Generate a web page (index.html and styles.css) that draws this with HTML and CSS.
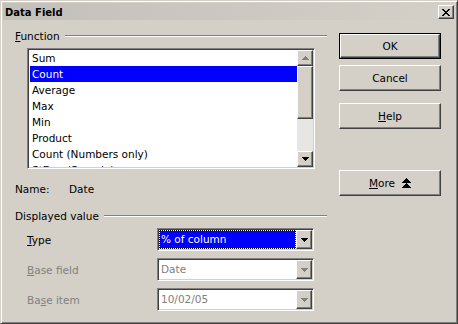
FILE: index.html
```html
<!DOCTYPE html>
<html lang="en">
<head>
  <meta charset="UTF-8">
  <title>Data Field</title>
  <link rel="stylesheet" href="styles.css">
</head>
<body>
  <div class="window">
    <div class="titlebar">
      <span class="title">Data Field</span>
      <div class="close raised">
        <svg width="8" height="7" viewBox="0 0 8 7" shape-rendering="crispEdges"><path d="M0 0h2v1h1v1h2V1h1V0h2v1H7v1H6v1H5v1h1v1h1v1h1v1H6V6H5V5H3v1H2v1H0V6h1V5h1V4h1V3H2V2H1V1H0z" fill="#000"/></svg>
      </div>
    </div>

    <div class="main">
      <div class="left">
        <div class="section"><span><u>F</u>unction</span><i class="rule"></i></div>

        <div class="listbox">
          <ul class="items">
            <li>Sum</li>
            <li class="sel">Count</li>
            <li>Average</li>
            <li>Max</li>
            <li>Min</li>
            <li>Product</li>
            <li>Count (Numbers only)</li>
            <li>StDev (Sample)</li>
          </ul>
          <div class="vscroll">
            <div class="sbtn raised">
              <svg width="7" height="4" viewBox="0 0 7 4" shape-rendering="crispEdges"><path d="M3 0h1v1h1v1h1v1h1v1H0V3h1V2h1V1h1z" fill="#808080"/></svg>
            </div>
            <div class="thumb raised"></div>
            <div class="track"></div>
            <div class="sbtn raised">
              <svg width="7" height="4" viewBox="0 0 7 4" shape-rendering="crispEdges"><path d="M0 0h7v1H6v1H5v1H4v1H3V3H2V2H1V1H0z" fill="#000"/></svg>
            </div>
          </div>
        </div>

        <div class="name-row"><span class="key">Name:</span><span>Date</span></div>

        <div class="section"><span>Displayed value</span><i class="rule"></i></div>

        <div class="field-row">
          <span class="label"><u>T</u>ype</span>
          <div class="combo">
            <div class="value focus"><span>% of column</span></div>
            <div class="dbtn raised">
              <svg width="7" height="4" viewBox="0 0 7 4" shape-rendering="crispEdges"><path d="M0 0h7v1H6v1H5v1H4v1H3V3H2V2H1V1H0z" fill="#000"/></svg>
            </div>
          </div>
        </div>

        <div class="field-row disabled">
          <span class="label"><u>B</u>ase field</span>
          <div class="combo">
            <div class="value">Date</div>
            <div class="dbtn raised">
              <svg width="7" height="4" viewBox="0 0 7 4" shape-rendering="crispEdges"><path d="M0 0h7v1H6v1H5v1H4v1H3V3H2V2H1V1H0z" fill="#808080"/></svg>
            </div>
          </div>
        </div>

        <div class="field-row disabled">
          <span class="label">Ba<u>s</u>e item</span>
          <div class="combo">
            <div class="value">10/02/05</div>
            <div class="dbtn raised">
              <svg width="7" height="4" viewBox="0 0 7 4" shape-rendering="crispEdges"><path d="M0 0h7v1H6v1H5v1H4v1H3V3H2V2H1V1H0z" fill="#808080"/></svg>
            </div>
          </div>
        </div>
      </div>

      <div class="right">
        <div class="default-frame"><button class="btn raised">OK</button></div>
        <button class="btn raised cancel">Cancel</button>
        <button class="btn raised help"><span><u>H</u>elp</span></button>
        <button class="btn raised more">
          <span><u>M</u>ore</span>
          <svg width="9" height="10" viewBox="0 0 9 10" shape-rendering="crispEdges"><path d="M4 0h1v1h1v1h1v1h1v1h1v1H0V4h1V3h1V2h1V1h1z M4 5h1v1h1v1h1v1h1v1h1v1H0V9h1V8h1V7h1V6h1z" fill="#000"/></svg>
        </button>
      </div>
    </div>
  </div>
</body>
</html>
```

FILE: styles.css
```css
body {
  margin: 0;
  background: #d4d0c8;
  font-family: "DejaVu Sans", sans-serif;
  font-size: 10.5px;
  color: #000;
}

.window {
  width: 458px;
  height: 324px;
  box-sizing: border-box;
  background: #d4d0c8;
  border: 1px solid;
  border-color: #d4d0c8 #404040 #404040 #d4d0c8;
  box-shadow: inset 1px 1px #fff, inset -1px -1px #808080;
  padding: 2px;
}

.titlebar {
  height: 17px;
  display: flex;
  align-items: center;
  justify-content: space-between;
  padding-left: 2px;
  background: linear-gradient(to right, #c3c0ba, #d4d0c8);
}

.title {
  font-weight: bold;
  font-size: 10px;
  padding-top: 1px;
}

.raised {
  box-sizing: border-box;
  background: #d4d0c8;
  border: 1px solid;
  border-color: #fff #404040 #404040 #fff;
  box-shadow: inset -1px -1px #808080;
}

.close {
  width: 16px;
  height: 14px;
  margin-right: 1px;
  margin-top: 1px;
  display: flex;
  align-items: center;
  justify-content: center;
}

.main {
  display: flex;
  padding: 9px 0 0 12px;
}

.left {
  width: 312px;
}

.section {
  display: flex;
  align-items: center;
  height: 14px;
  line-height: 14px;
}

.rule {
  flex: 1;
  margin-left: 5px;
  border-top: 1px solid #808080;
  border-bottom: 1px solid #fff;
}

.listbox {
  margin: 5px 0 0 12px;
  width: 288px;
  height: 121px;
  box-sizing: border-box;
  border: 1px solid;
  border-color: #808080 #fff #fff #808080;
  box-shadow: inset 1px 1px #404040, inset -1px -1px #d4d0c8;
  padding: 1px;
  background: #fff;
  display: flex;
  overflow: hidden;
}

.items {
  list-style: none;
  margin: 0;
  padding: 0 0 0 1px;
  flex: 1;
  overflow: hidden;
}

.items li {
  height: 16px;
  line-height: 16px;
  padding-left: 2px;
  white-space: nowrap;
}

.items li.sel {
  background: #0000ff;
  color: #fff;
}

.vscroll {
  width: 16px;
  display: flex;
  flex-direction: column;
}

.sbtn {
  height: 16px;
  flex: none;
  display: flex;
  align-items: center;
  justify-content: center;
}

.thumb {
  height: 53px;
  flex: none;
}

.track {
  flex: 1;
  background: #e8e6e2;
}

.name-row {
  margin-top: 13px;
  height: 14px;
  line-height: 14px;
  display: flex;
}

.name-row .key {
  width: 54px;
}

.name-row + .section {
  margin-top: 13px;
}

.field-row {
  display: flex;
  align-items: center;
  margin-top: 7px;
  padding-left: 12px;
}

.section + .field-row {
  margin-top: 5px;
}

.field-row .label {
  width: 130px;
}

.field-row.disabled {
  color: #808080;
}

.combo {
  width: 157px;
  height: 23px;
  box-sizing: border-box;
  border: 1px solid;
  border-color: #808080 #fff #fff #808080;
  box-shadow: inset 1px 1px #404040, inset -1px -1px #d4d0c8;
  padding: 1px;
  background: #fff;
  display: flex;
}

.combo .value {
  flex: 1;
  line-height: 19px;
  padding-left: 2px;
  white-space: nowrap;
}

.combo .value.focus {
  padding: 0;
  background: #000;
  display: flex;
}

.combo .value.focus span {
  flex: 1;
  border: 1px dotted #fff;
  background: #0000ff;
  background-clip: padding-box;
  color: #fff;
  line-height: 17px;
  padding-left: 1px;
}

.dbtn {
  width: 16px;
  display: flex;
  align-items: center;
  justify-content: center;
}

.right {
  margin-left: 12px;
  width: 102px;
  display: flex;
  flex-direction: column;
}

.btn {
  width: 102px;
  height: 26px;
  font-family: inherit;
  font-size: inherit;
  color: #000;
  padding: 0;
  display: flex;
  align-items: center;
  justify-content: center;
  gap: 7px;
}

.default-frame {
  margin-top: 4px;
  border: 1px solid #000;
  width: 102px;
  height: 26px;
  box-sizing: border-box;
}

.default-frame .btn {
  width: 100px;
  height: 24px;
}

.cancel {
  margin-top: 6px;
}

.help {
  margin-top: 12px;
}

.more {
  margin-top: 41px;
}
```
